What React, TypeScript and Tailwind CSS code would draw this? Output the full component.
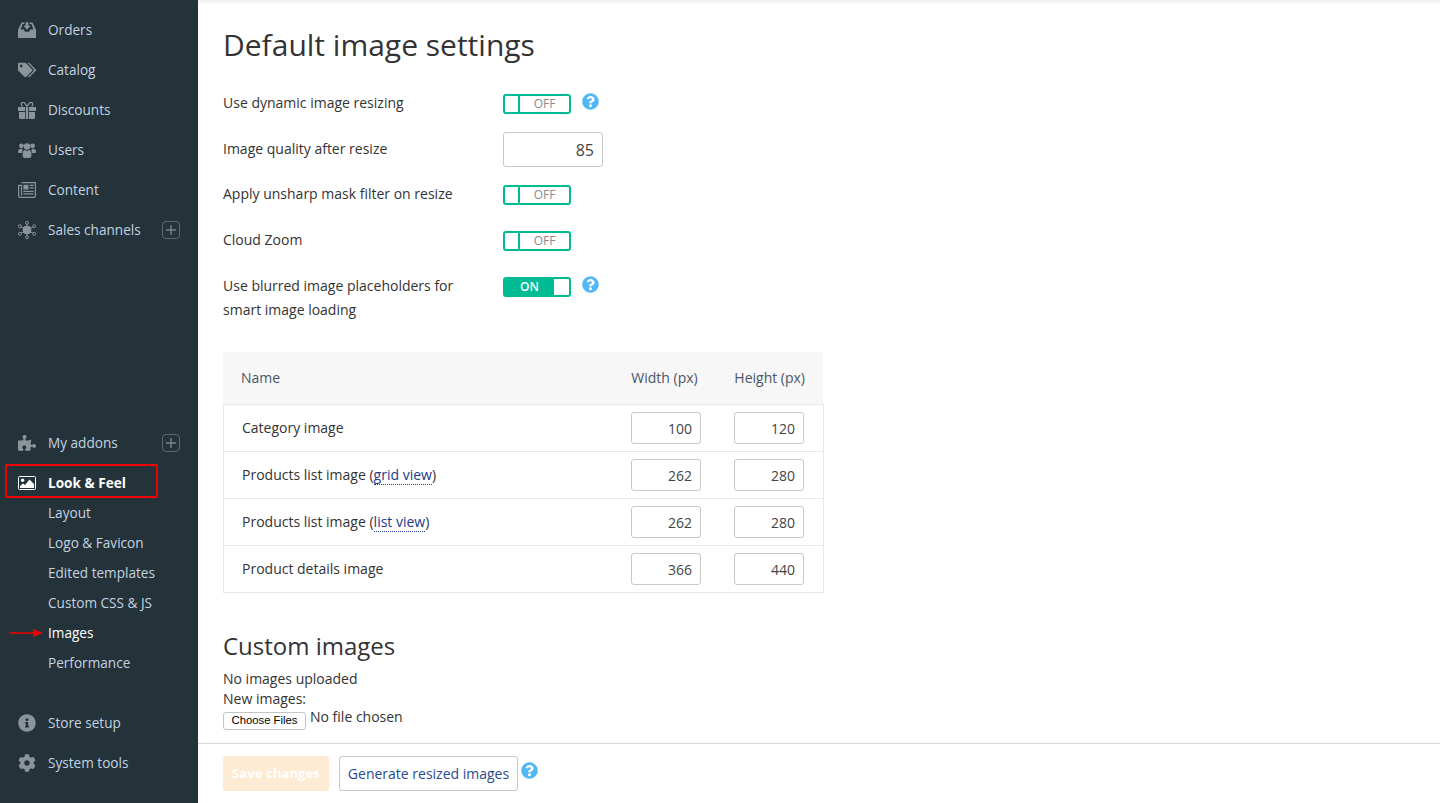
import { FaCog, FaInfoCircle, FaPuzzlePiece, FaQuestionCircle, FaTags } from "react-icons/fa";
import type { ReactNode } from "react";

const InboxIcon = () => (
  <svg viewBox="0 0 18 16" className="h-4 w-[18px]" fill="currentColor">
    <path d="M3.5 0.5H6.4V2H4.6L2.6 7.4H5.8L7 9.8H11L12.2 7.4H15.4L13.4 2H11.6V0.5H14.5L18 7.8V16H0V7.8Z" />
    <path d="M7.6 0.2H10.4V3.8H12.6L9 7.8L5.4 3.8H7.6Z" />
  </svg>
);

const GiftIcon = () => (
  <svg viewBox="0 0 18 17" className="h-[17px] w-[18px]" fill="currentColor">
    <path d="M0 5H7V9H0ZM11 5H18V9H11ZM1 10H7V17H2.5Q1 17 1 15.5ZM11 10H17V15.5Q17 17 15.5 17H11ZM7.8 5H10.2V17H7.8Z" />
    <path d="M9 4.5L6.5 0.8Q4.8 -0.2 3.6 1.2Q2.8 3.2 4.4 4.5M9 4.5L11.5 0.8Q13.2 -0.2 14.4 1.2Q15.2 3.2 13.6 4.5" fill="none" stroke="currentColor" strokeWidth="1.3" />
  </svg>
);

const UsersIcon = () => (
  <svg viewBox="0 0 18 15" className="h-[15px] w-[18px]" fill="currentColor">
    <circle cx="3.4" cy="2.8" r="2.4" />
    <circle cx="14.6" cy="2.8" r="2.4" />
    <path d="M0 9.2Q0 6 2.6 5.8Q3.6 6.4 4.8 6.2Q4 7.6 4.2 10H1.2Q0 10 0 9.2ZM18 9.2Q18 6 15.4 5.8Q14.4 6.4 13.2 6.2Q14 7.6 13.8 10H16.8Q18 10 18 9.2Z" />
    <circle cx="9" cy="3.4" r="3.2" />
    <path d="M4.6 11.2Q4.6 7.4 6.8 7Q9 8.4 11.2 7Q13.4 7.4 13.4 11.2V13Q13.4 15 11.4 15H6.6Q4.6 15 4.6 13Z" />
  </svg>
);

const NewsIcon = () => (
  <svg viewBox="0 0 18 16" className="h-4 w-[18px]">
    <path d="M3.5 0.6H17.4V14Q17.4 15.4 16 15.4H2Q0.6 15.4 0.6 14V3.4H3.5V13.6" fill="none" stroke="currentColor" strokeWidth="1.2" />
    <path d="M5.4 2.8H10.4V7.6H5.4ZM11.6 2.8H15.6V4H11.6ZM11.6 5.2H15.6V6.4H11.6ZM5.4 8.8H15.6V10H5.4ZM5.4 11.2H15.6V12.4H5.4Z" fill="currentColor" />
  </svg>
);

const HubIcon = () => (
  <svg viewBox="0 0 18 18" className="h-[18px] w-[18px]" fill="none" stroke="currentColor" strokeWidth="1">
    <circle cx="9" cy="9" r="4" fill="currentColor" />
    <path d="M9 2.5V15.5M2.5 5.6L15.5 12.4M15.5 5.6L2.5 12.4" />
    <circle cx="9" cy="1.8" r="1.5" fill="#24323a" />
    <circle cx="9" cy="16.2" r="1.5" fill="#24323a" />
    <circle cx="1.8" cy="5.2" r="1.5" fill="#24323a" />
    <circle cx="16.2" cy="5.2" r="1.5" fill="#24323a" />
    <circle cx="1.8" cy="12.8" r="1.5" fill="#24323a" />
    <circle cx="16.2" cy="12.8" r="1.5" fill="#24323a" />
  </svg>
);

const PictureIcon = () => (
  <svg viewBox="0 0 18 14" className="h-[14px] w-[18px]">
    <rect x="0.5" y="0.5" width="17" height="13" rx="1" fill="none" stroke="white" />
    <circle cx="4.6" cy="4.2" r="1.7" fill="white" />
    <path d="M2 12V10L5 7.5L7 9L11.5 3.5L16 8V12Z" fill="white" />
  </svg>
);

const PlusBox = () => (
  <span className="ml-auto mr-[18px] flex h-[18px] w-[18px] items-center justify-center rounded-[4px] border border-[#5d6970] text-[#7b858b]">
    <svg viewBox="0 0 10 10" className="h-[10px] w-[10px]" stroke="currentColor" strokeWidth="1.4">
      <path d="M5 0V10M0 5H10" />
    </svg>
  </span>
);

const NavItem = ({ icon, label, plus }: { icon: ReactNode; label: string; plus?: boolean }) => (
  <div className="flex h-10 items-center text-[13.6px] text-[#c3d3e0]">
    <span className="flex w-[48px] justify-start pl-[18px] text-[#8b9499]">{icon}</span>
    <span>{label}</span>
    {plus && <PlusBox />}
  </div>
);

const SubItem = ({ label, active }: { label: string; active?: boolean }) => (
  <div className={`relative flex h-[30px] items-center pl-[48px] text-[13.6px] ${active ? "text-white" : "text-[#c3d3e0]"}`}>
    {active && (
      <svg viewBox="0 0 34 8" className="absolute left-[9px] top-[11px] h-2 w-[34px]" fill="#f00000">
        <path d="M0 3.2H24V0L34 4L24 8V4.8H0Z" />
      </svg>
    )}
    <span>{label}</span>
  </div>
);

const Help = ({ className }: { className: string }) => (
  <FaQuestionCircle className={`text-[17px] text-[#4fb8f5] ${className}`} />
);

const Toggle = ({ on }: { on?: boolean }) =>
  on ? (
    <div className="flex h-5 w-[68px] items-center rounded-[3px] border-2 border-[#00bc94] bg-[#00bc94] text-[12px] font-semibold text-white">
      <span className="flex-1 text-center">ON</span>
      <span className="h-full w-[15px] rounded-r-[1px] bg-white" />
    </div>
  ) : (
    <div className="flex h-5 w-[68px] items-center rounded-[3px] border-2 border-[#00bc94] bg-white text-[12px] text-[#8a8a8a]">
      <span className="h-full w-[15px] border-r-2 border-[#00bc94]" />
      <span className="flex-1 text-center">OFF</span>
    </div>
  );

const NumInput = ({ value }: { value: number }) => (
  <div className="flex h-8 w-[70px] items-center justify-end rounded-[3px] border border-[#c8c8c8] bg-white pr-2 text-[14px] text-[#444444]">
    {value}
  </div>
);

const Row = ({ children, w, h }: { children: ReactNode; w: number; h: number }) => (
  <div className="flex h-[47px] items-center border-b border-[#e8e8e8] text-[14px] text-[#333333]">
    <div className="-mt-[2px] flex-1 pl-[18px]">{children}</div>
    <div className="mr-[19px] flex gap-[33px]">
      <NumInput value={w} />
      <NumInput value={h} />
    </div>
  </div>
);

const SizeLink = ({ children }: { children: ReactNode }) => (
  <a className="border-b border-dotted border-[#223a8a] leading-[16px] text-[#223a8a]">{children}</a>
);

export default function App() {
  return (
    <div className="flex h-[803px] w-full overflow-hidden bg-white font-['Open_Sans',sans-serif]">
      <aside className="flex w-[198px] shrink-0 flex-col bg-[#24323a] pb-[20px] pt-[10px]">
        <div>
          <NavItem icon={<InboxIcon />} label="Orders" />
          <NavItem icon={<FaTags className="text-[18px]" />} label="Catalog" />
          <NavItem icon={<GiftIcon />} label="Discounts" />
          <NavItem icon={<UsersIcon />} label="Users" />
          <NavItem icon={<NewsIcon />} label="Content" />
          <NavItem icon={<HubIcon />} label="Sales channels" plus />
        </div>
        <div className="mt-auto">
          <NavItem icon={<FaPuzzlePiece className="text-[18px]" />} label="My addons" plus />
          <div className="relative flex h-10 items-center text-[13.6px] font-bold text-white">
            <span className="flex w-[48px] pl-[18px]"><PictureIcon /></span>
            <span>Look &amp; Feel</span>
            <div className="absolute left-[5px] top-[1px] h-[34px] w-[153px] border-2 border-[#f00000]" />
          </div>
          <div className="-mt-[5px]">
            <SubItem label="Layout" />
            <SubItem label="Logo & Favicon" />
            <SubItem label="Edited templates" />
            <SubItem label="Custom CSS & JS" />
            <SubItem label="Images" active />
            <SubItem label="Performance" />
          </div>
          <div className="mt-[25px]">
            <NavItem icon={<FaInfoCircle className="text-[18px]" />} label="Store setup" />
            <NavItem icon={<FaCog className="text-[18px]" />} label="System tools" />
          </div>
        </div>
      </aside>

      <main className="flex min-w-0 flex-1 flex-col">
        <div className="h-[743px] overflow-hidden bg-gradient-to-b from-[#f0f0f0] to-white to-[6px] pl-[25px] pt-[24px]">
          <h1 className="text-[30px] leading-[42px] text-[#333333]">Default image settings</h1>

          <div className="mt-[28px] text-[14px] text-[#333333]">
            <div className="flex h-5 items-center">
              <span className="-mt-[4px] w-[280px]">Use dynamic image resizing</span>
              <Toggle />
              <Help className="-mt-[6px] ml-[11px]" />
            </div>
            <div className="mt-[18px] flex h-[35px] items-center">
              <span className="-mt-[2px] w-[280px]">Image quality after resize</span>
              <div className="flex h-[35px] w-[100px] items-center justify-end rounded-[3px] border border-[#c8c8c8] pr-2 text-[16px] text-[#444444]">85</div>
            </div>
            <div className="mt-[18px] flex h-5 items-center">
              <span className="-mt-[4px] w-[280px]">Apply unsharp mask filter on resize</span>
              <Toggle />
            </div>
            <div className="mt-[26px] flex h-5 items-center">
              <span className="-mt-[4px] w-[280px]">Cloud Zoom</span>
              <Toggle />
            </div>
            <div className="mt-[26px] flex">
              <span className="-mt-[3px] w-[280px] leading-[24px]">
                Use blurred image placeholders for<br />smart image loading
              </span>
              <Toggle on />
              <Help className="-mt-px ml-[11px]" />
            </div>
          </div>

          <div className="mt-[30px] w-[601px]">
            <div className="flex h-[52px] w-[600px] items-center bg-[#f7f7f7] text-[14px] text-[#4a5568]">
              <span className="-mt-[2px] flex-1 pl-[18px]">Name</span>
              <span className="-mt-[2px] w-[103px]">Width (px)</span>
              <span className="-mt-[2px] mr-[18px]">Height (px)</span>
            </div>
            <div className="border-x border-t border-[#e8e8e8]">
              <Row w={100} h={120}>Category image</Row>
              <Row w={262} h={280}>Products list image (<SizeLink>grid view</SizeLink>)</Row>
              <Row w={262} h={280}>Products list image (<SizeLink>list view</SizeLink>)</Row>
              <Row w={366} h={440}>Product details image</Row>
            </div>
          </div>

          <h2 className="mt-[36px] text-[24px] leading-[34px] text-[#333333]">Custom images</h2>
          <div className="mt-[6px] text-[14px] leading-[20px] text-[#333333]">
            <div>No images uploaded</div>
            <div>New images:</div>
            <div className="flex items-start">
              <button className="mt-[3px] h-[18px] w-[83px] rounded-[3px] border border-[#c4c4c4] bg-white font-['Liberation_Sans',sans-serif] text-[11.3px] leading-none text-black">Choose Files</button>
              <span className="ml-[4px] -mt-[2px]">No file chosen</span>
            </div>
          </div>
        </div>

        <div className="flex h-[60px] items-start gap-[10px] border-t border-[#d9d9d9] pl-[25px] pt-[12px]">
          <button className="h-[35px] w-[106px] rounded-[3px] bg-[#fdebd3] text-[13.2px] font-bold text-white">Save changes</button>
          <button className="h-[35px] w-[179px] rounded-[3px] border border-[#c8c8c8] text-[14px] text-[#2a4a8f]">Generate resized images</button>
          <Help className="-ml-[7px] mt-[6px]" />
        </div>
      </main>
    </div>
  );
}
